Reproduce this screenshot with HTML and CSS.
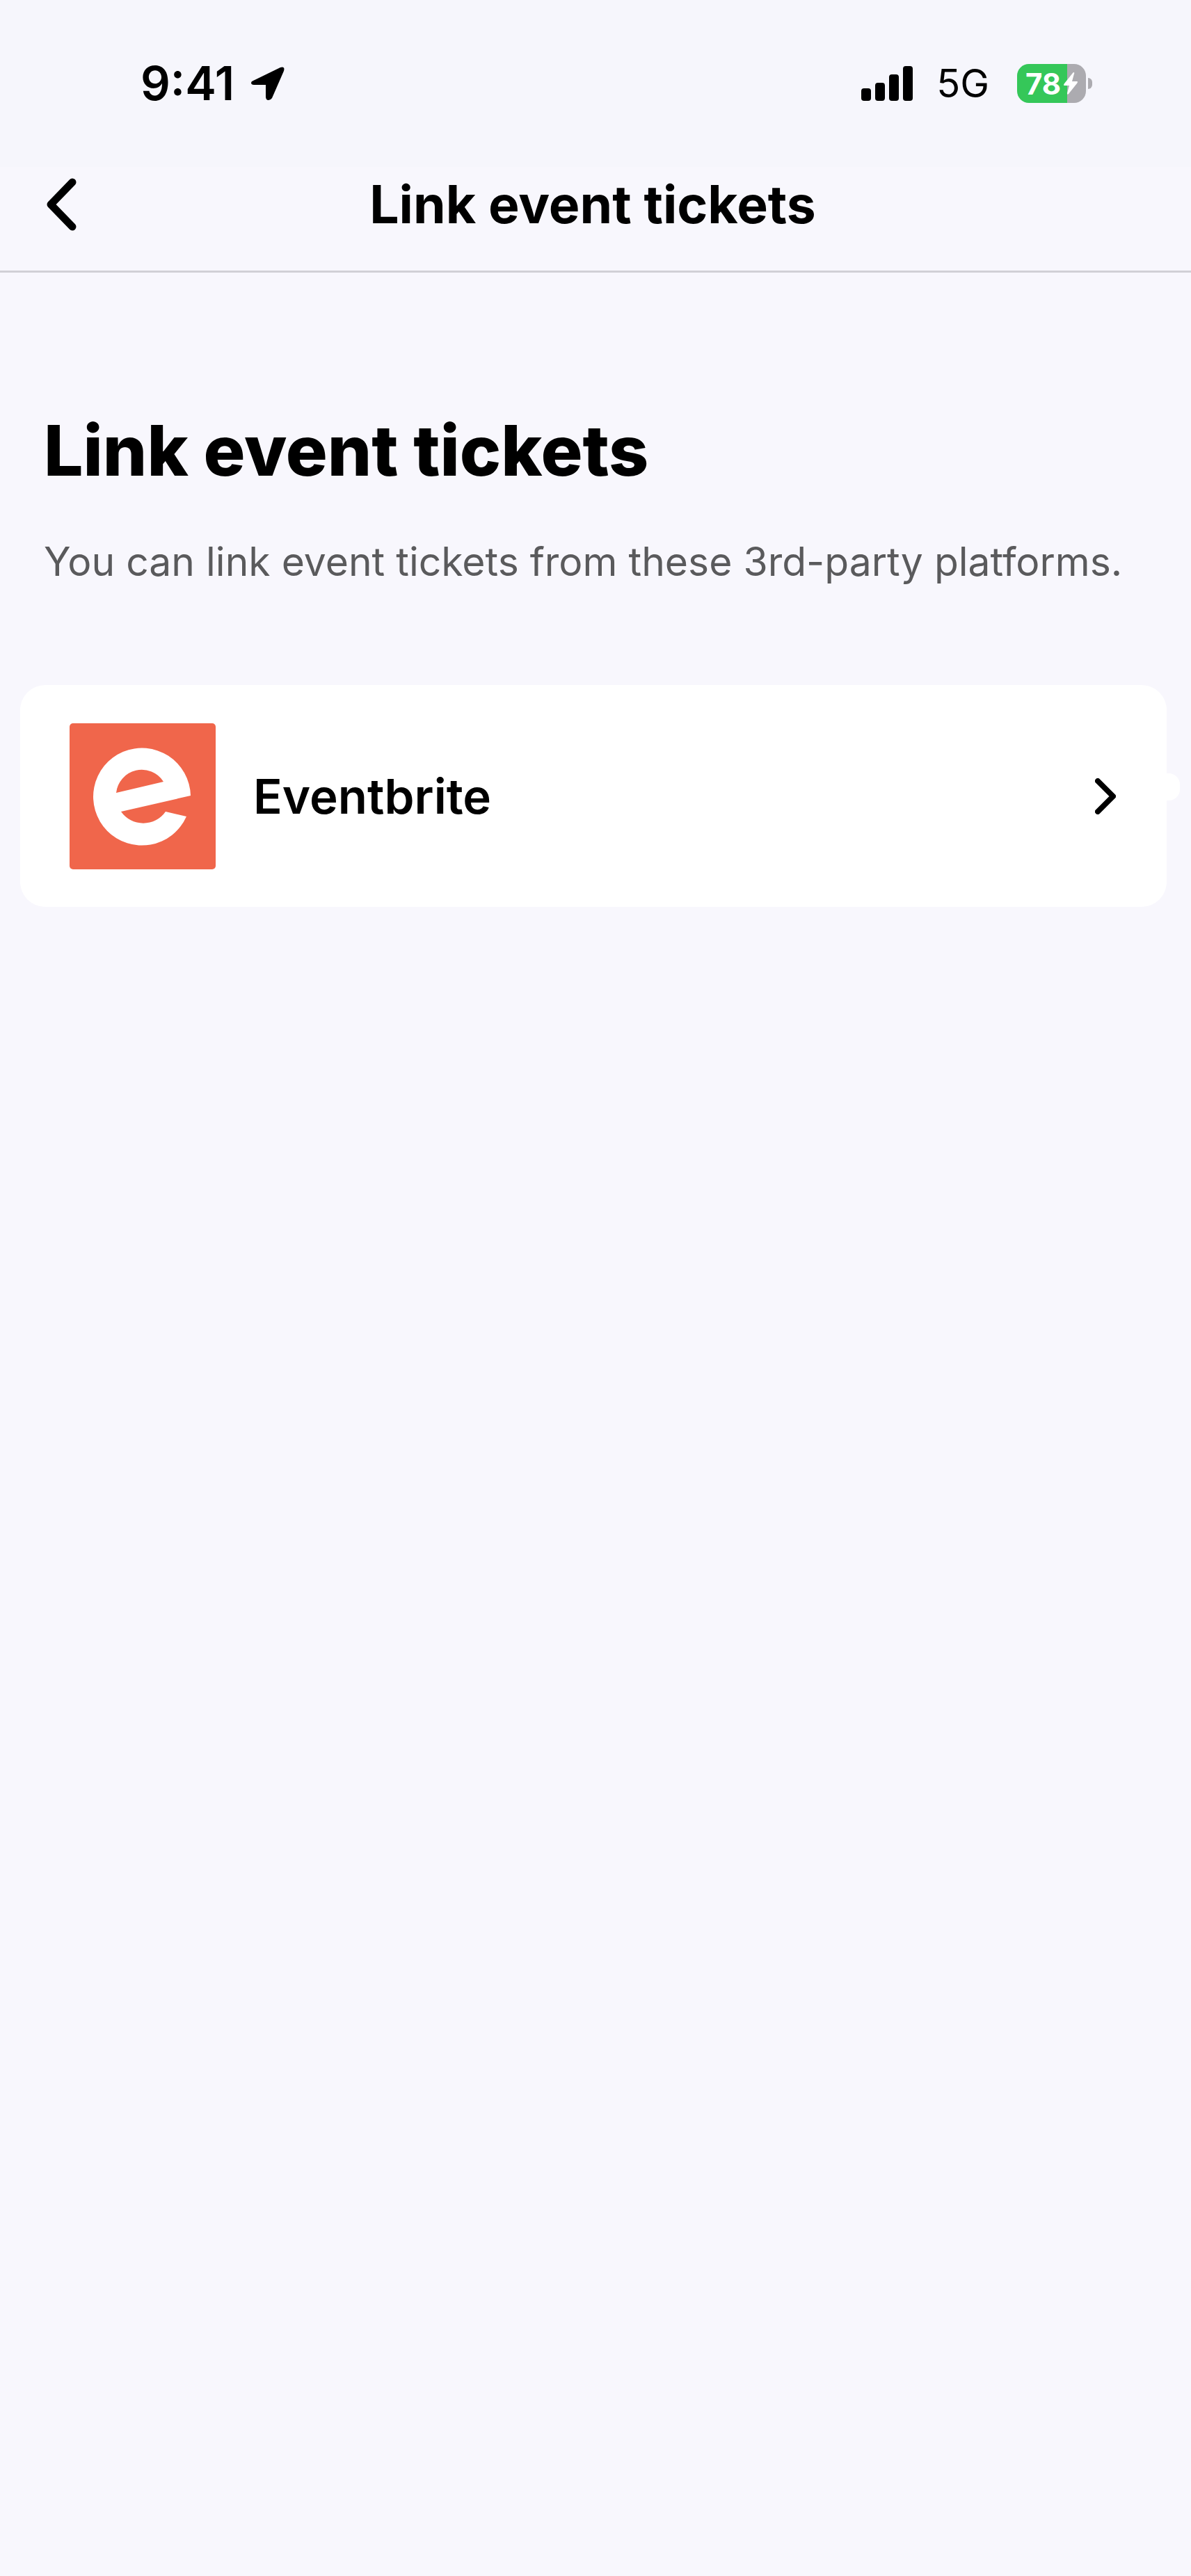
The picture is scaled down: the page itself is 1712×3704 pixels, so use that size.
FILE: index.html
```
<!DOCTYPE html>
<html lang="en">
<head>
<meta charset="utf-8">
<meta name="viewport" content="width=device-width, initial-scale=1">
<title>Link event tickets</title>
<link rel="stylesheet" href="styles.css">
</head>
<body>
<div class="status">
  <div class="status-group">
    <span class="time">9:41</span>
    <svg class="location" viewBox="0 0 48 48" aria-hidden="true"><path d="M3 20 42 1Q49-1 47 6L30 45Q28 48 25 48Q21 48 21 43V26H4Q0 26 0 23Q0 21 3 20Z"/></svg>
  </div>
  <div class="status-group">
    <svg class="signal" viewBox="0 0 74 50" aria-hidden="true"><rect y="32" width="14" height="18" rx="4"/><rect x="20" y="24" width="14" height="26" rx="4"/><rect x="40" y="12" width="14" height="38" rx="4"/><rect x="60" width="14" height="50" rx="4"/></svg>
    <span class="network">5G</span>
    <div class="battery">
      <div class="battery-body">
        <span>78</span>
        <svg class="bolt" viewBox="0 0 20 32" aria-hidden="true"><path d="M14 0Q16 0 15 2L12 13H19Q21 13 19 16L7 31Q5 33 5 30L8 19H1Q-1 19 1 16L13 1Z"/></svg>
      </div>
      <div class="battery-tip"></div>
    </div>
  </div>
</div>
<header class="navbar">
  <button class="back" type="button" aria-label="Back"><svg viewBox="0 0 44 76" aria-hidden="true"><path d="M38 6 7 38 38 70"/></svg></button>
  <div class="navbar-title">Link event tickets</div>
</header>
<main class="content">
  <h1>Link event tickets</h1>
  <p>You can link event tickets from these 3rd-party platforms.</p>
  <a class="card" href="#eventbrite">
    <svg class="logo" viewBox="0 0 210 210" aria-hidden="true"><rect width="210" height="210" rx="5" fill="#f0664b"/><path fill="#fff" fill-rule="evenodd" d="M174 104A70 70 0 1 0 168 134L138 127A39 39 0 0 1 74 127ZM67 100A37 37 0 0 1 135 84Z"/></svg>
    <span class="card-name">Eventbrite</span>
    <svg class="chevron" viewBox="0 0 30 52" aria-hidden="true"><path d="M4 4 26 26 4 48"/></svg>
  </a>
</main>
</body>
</html>
```
FILE: styles.css
```
* { box-sizing: border-box; }

body {
  margin: 0;
  min-height: 100vh;
  background: #f8f7fd;
  color: #000;
  font-family: Inter, "Liberation Sans", sans-serif;
}

svg { display: block; flex: none; }

.status {
  display: flex;
  justify-content: space-between;
  height: 240px;
  padding: 80px 142px 80px 202px;
  background: #f6f6fc;
}

.status-group { display: flex; align-items: center; height: 80px; }
.time { font-size: 67px; font-weight: 600; line-height: 80px; }
.location { width: 48px; height: 48px; margin-left: 24px; }
.signal { width: 74px; height: 50px; }
.network { margin: 0 40px 0 34px; font-size: 56px; line-height: 80px; }
.battery { display: flex; align-items: center; gap: 3px; }

.battery-body {
  display: flex;
  align-items: center;
  gap: 4px;
  width: 99px;
  height: 56px;
  padding-left: 12px;
  border-radius: 17px;
  background: linear-gradient(to right, #35c759 72px, #acabb0 72px);
  color: #fff;
  font-size: 42px;
  font-weight: 700;
}

.bolt { width: 20px; height: 32px; fill: #fff; }
.battery-tip { width: 6px; height: 16px; border-radius: 0 6px 6px 0; background: #acabb0; }

.navbar {
  display: grid;
  grid-template-columns: 160px 1fr 160px;
  height: 152px;
  padding-right: 8px;
  border-bottom: 3px solid #d1d0d6;
}

.back { height: 108px; padding: 0 0 0 66px; border: 0; background: none; }
.back svg { width: 44px; height: 76px; fill: none; stroke: #000; stroke-width: 11px; stroke-linecap: round; stroke-linejoin: round; }
.navbar-title { text-align: center; font-size: 75px; font-weight: 700; line-height: 108px; }

.content { padding: 192px 35px 0 29px; }

h1 {
  margin: 0;
  padding-left: 34px;
  font-size: 100px;
  font-weight: 800;
  line-height: 128px;
}

p {
  margin: 56px 0 0;
  padding-left: 34px;
  color: #5a5a5c;
  font-size: 57px;
  line-height: 80px;
}

.card {
  position: relative;
  display: flex;
  align-items: center;
  height: 319px;
  margin-top: 137px;
  padding: 0 73px 0 71px;
  border-radius: 36px;
  background: #fff;
  color: #000;
  text-decoration: none;
}

.card::after {
  content: "";
  position: absolute;
  top: 127px;
  left: 100%;
  width: 19px;
  height: 39px;
  border-radius: 0 16px 16px 0;
  background: #fff;
}

.logo { width: 210px; height: 210px; }
.card-name { flex: 1; margin-left: 54px; font-size: 69px; font-weight: 600; line-height: 80px; }
.chevron { width: 30px; height: 52px; fill: none; stroke: #000; stroke-width: 8px; stroke-linecap: round; stroke-linejoin: round; }
```
